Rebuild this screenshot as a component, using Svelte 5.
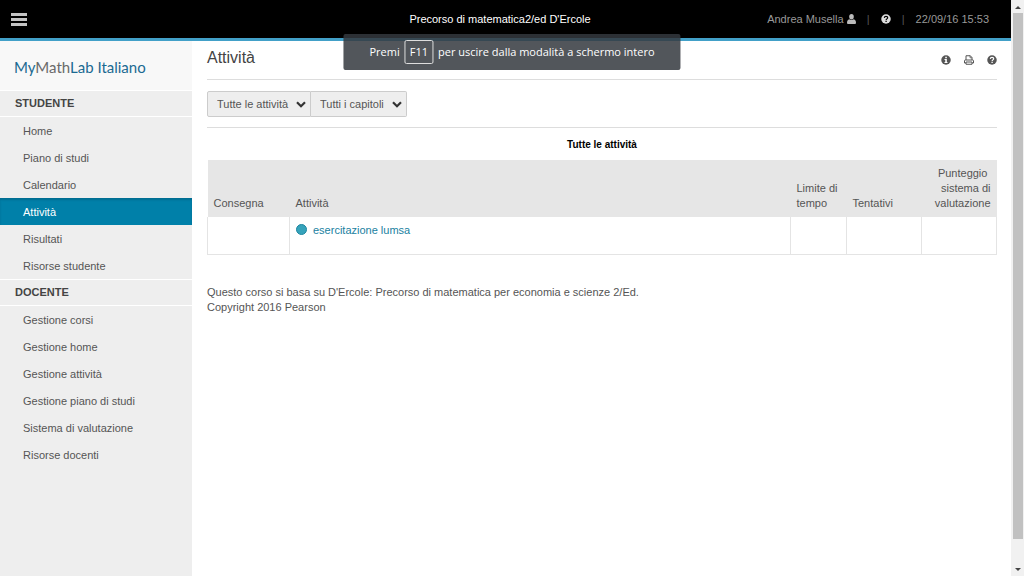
<script>
  const groups = [
    { title: 'STUDENTE', items: ['Home', 'Piano di studi', 'Calendario', 'Attività', 'Risultati', 'Risorse studente'] },
    { title: 'DOCENTE', items: ['Gestione corsi', 'Gestione home', 'Gestione attività', 'Gestione piano di studi', 'Sistema di valutazione', 'Risorse docenti'] }
  ];
  const current = 'Attività';
</script>

{#snippet help()}
  <svg width="10" height="10" viewBox="0 0 20 20" aria-hidden="true">
    <circle cx="10" cy="10" r="9.5" fill="currentColor" />
    <path d="M6.6 7.8C6.8 5.6 8.2 4.8 10 4.8c2 0 3.4 1 3.4 2.7 0 2.2-3.2 2.3-3.2 4.6" fill="none" stroke="var(--hole)" stroke-width="2.4" />
    <rect x="8.9" y="13.4" width="2.6" height="2.6" fill="var(--hole)" />
  </svg>
{/snippet}

{#snippet chevron()}
  <svg class="chevron" width="10" height="7" viewBox="0 0 10 7" aria-hidden="true">
    <path d="M1 1.2 5 5.2 9 1.2" fill="none" stroke="#333" stroke-width="2.2" />
  </svg>
{/snippet}

<div class="window">
  <div class="page">
    <header>
      <button class="menu" aria-label="Menu"><span></span><span></span><span></span></button>
      <div class="course">Precorso di matematica2/ed D'Ercole</div>
      <div class="account">
        <a class="user" href="#account">Andrea Musella
          <svg width="9" height="10" viewBox="0 0 18 20" aria-hidden="true">
            <ellipse cx="9" cy="5.6" rx="4.6" ry="5.4" fill="currentColor" />
            <path d="M4.5 10.5C1.5 11 0 14 0 17.5 0 19 1 20 2.500 20h13c1.500 0 2.500-1 2.500-2.500 0-3.500-1.500-6.500-4.500-7-1.200 1-2.800 1.700-4.500 1.700s-3.300-.7-4.500-1.700z" fill="currentColor" />
          </svg>
        </a>
        <span class="bar">|</span>
        <button class="icon light" aria-label="Aiuto">{@render help()}</button>
        <span class="bar">|</span>
        <time>22/09/16 15:53</time>
      </div>
    </header>

    <div class="body">
      <aside>
        <div class="logo">My<span>Math</span>Lab Italiano</div>
        <nav>
          {#each groups as group}
            <h2>{group.title}</h2>
            <ul>
              {#each group.items as item}
                <li><a href="#voce" class:active={item === current}>{item}</a></li>
              {/each}
            </ul>
          {/each}
        </nav>
      </aside>

      <main>
        <div class="title">
          <h1>Attività</h1>
          <div class="tools">
            <button class="icon" aria-label="Informazioni">
              <svg width="10" height="10" viewBox="0 0 20 20" aria-hidden="true">
                <circle cx="10" cy="10" r="9.5" fill="currentColor" />
                <path d="M8.500 3.500h3.200v2.800H8.500zM7 8h4.700v6H13v2H7v-2h1.500v-4H7z" fill="var(--hole)" />
              </svg>
            </button>
            <button class="icon" aria-label="Stampa">
              <svg width="10" height="10" viewBox="0 0 20 20" aria-hidden="true">
                <path d="M4 10V1.500h8.500L16 5v5" fill="none" stroke="currentColor" stroke-width="2" />
                <path d="M12 1v4.500h4" fill="none" stroke="currentColor" stroke-width="1.500" />
                <path d="M4 16H1v-4.500Q1 10 2.500 10h15q1.500 0 1.500 1.500V16h-3" fill="none" stroke="currentColor" stroke-width="2" />
                <path d="M4 14h12v4.500H4z" fill="none" stroke="currentColor" stroke-width="2" />
              </svg>
            </button>
            <button class="icon" aria-label="Guida">{@render help()}</button>
          </div>
        </div>

        <div class="filters">
          <div class="pick">
            <select aria-label="Attività"><option>Tutte le attività</option></select>
            {@render chevron()}
          </div>
          <div class="pick second">
            <select aria-label="Capitoli"><option>Tutti i capitoli</option></select>
            {@render chevron()}
          </div>
        </div>

        <table>
          <caption>Tutte le attività</caption>
          <colgroup><col class="due" /><col /><col class="limit" /><col class="tries" /><col class="score" /></colgroup>
          <thead>
            <tr><th>Consegna</th><th>Attività</th><th>Limite di tempo</th><th>Tentativi</th><th class="right">Punteggio&nbsp; sistema di valutazione</th></tr>
          </thead>
          <tbody>
            <tr><td></td><td><span class="dot"></span><a href="#esercitazione">esercitazione lumsa</a></td><td></td><td></td><td></td></tr>
          </tbody>
        </table>

        <footer>
          <p>Questo corso si basa su D'Ercole: Precorso di matematica per economia e scienze 2/Ed.</p>
          <p>Copyright 2016 Pearson</p>
        </footer>
      </main>
    </div>
  </div>

  <div class="scroll" aria-hidden="true">
    <i class="up"></i>
    <div class="thumb"></div>
    <i class="down"></i>
  </div>

  <div class="toast" role="status">Premi <kbd>F11</kbd> per uscire dalla modalità a schermo intero</div>
</div>

<style>
  :global(body) { background: #fff; }
  .window {
    position: relative;
    display: flex;
    min-height: 100vh;
    font: 11px/15px "Liberation Sans", Arial, sans-serif;
    color: #555;
  }
  .window * { box-sizing: border-box; }
  .page { flex: 1; min-width: 0; display: flex; flex-direction: column; }
  a { color: inherit; text-decoration: none; }
  button { font: inherit; color: inherit; background: none; border: 0; padding: 0; }
  svg { display: block; }
  header {
    display: grid;
    grid-template-columns: 1fr auto 1fr;
    align-items: center;
    height: 41px;
    padding: 0 22px 0 11px;
    background: #000;
    border-bottom: 3px solid #42a0c8;
  }
  .menu { display: grid; gap: 2px; width: 16px; }
  .menu span { height: 3px; background: #c4c4c4; }
  .course { color: #fff; }
  .account { display: flex; align-items: center; justify-content: flex-end; color: #999; }
  .user { display: flex; align-items: center; gap: 3px; }
  .user svg { color: #bbb; }
  .bar { width: 25px; text-align: center; color: #555; }
  .icon { display: flex; --hole: #fff; color: #555; }
  .light { --hole: #000; color: #ddd; }
  .body { flex: 1; display: flex; }
  aside { width: 192px; flex: none; background: #eee; }
  .logo {
    height: 49px;
    padding: 16px 14px 0;
    background: #f8f8f8;
    font: 15px/20px Lato, sans-serif;
    color: #1b6a92;
    white-space: nowrap;
  }
  .logo span { color: #6a6a6a; }
  h2 {
    margin: 0;
    height: 27px;
    padding: 0 15px;
    border: solid #fff;
    border-width: 1px 0;
    font-size: 11px;
    line-height: 25px;
    color: #444;
  }
  ul { list-style: none; margin: 0; padding: 0; }
  li a { display: block; height: 27px; padding: 1px 23px 0; line-height: 27px; }
  .active { background: #0080a9; color: #fff; box-shadow: inset 0 2px 2px #006d92; }
  main { flex: 1; min-width: 0; padding: 0 14px 0 15px; }
  .title {
    display: flex;
    justify-content: space-between;
    height: 39px;
    border-bottom: 1px solid #ddd;
  }
  h1 { margin: 7px 0 0; font-size: 16px; line-height: 20px; font-weight: 400; color: #444; }
  .tools { display: flex; align-items: center; gap: 13px; }
  .filters { display: flex; padding: 11px 0 10px; border-bottom: 1px solid #ddd; }
  .pick { position: relative; width: 104px; }
  .second { width: 96px; }
  select {
    appearance: none;
    display: block;
    width: 100%;
    height: 26px;
    padding: 0 9px;
    border: 1px solid #ccc;
    border-radius: 2px 0 0 2px;
    background: #eee;
    font: inherit;
    color: #555;
  }
  .second select { border-left: 0; border-radius: 0 2px 2px 0; }
  .chevron { position: absolute; right: 5px; top: 10px; pointer-events: none; }
  table { width: 100%; table-layout: fixed; border-collapse: collapse; }
  caption { height: 32px; padding-top: 9px; font-size: 10px; font-weight: 700; color: #000; }
  .due { width: 82px; }
  .limit { width: 56px; }
  .tries { width: 75px; }
  .score { width: 75px; }
  th {
    height: 57px;
    padding: 6px;
    background: #e6e6e6;
    font-weight: 400;
    text-align: left;
    vertical-align: bottom;
  }
  .right { text-align: right; }
  td { height: 37px; padding: 6px 5px; border: 1px solid #e4e4e4; border-top: 0; vertical-align: top; }
  td a { color: #20819f; }
  .dot {
    display: inline-block;
    width: 11px;
    height: 11px;
    margin: 0 6px 0 1px;
    border: 1px solid #1c86a0;
    border-radius: 50%;
    background: #36a3bb;
    vertical-align: -1px;
  }
  footer { padding-top: 30px; }
  p { margin: 0; }
  .scroll {
    width: 13px;
    flex: none;
    display: flex;
    flex-direction: column;
    align-items: center;
    background: #f1f1f1;
  }
  .scroll i { width: 0; height: 0; border: 3px solid transparent; }
  .scroll .up { margin: 3px 0 4px; border-bottom-color: #444; }
  .scroll .down { margin: auto 0 2px; border-top-color: #444; }
  .thumb { width: 10px; height: 91.3%; background: #c1c1c1; }
  .toast {
    position: absolute;
    top: 34px;
    left: 50%;
    transform: translateX(-50%);
    display: flex;
    align-items: center;
    gap: 5px;
    height: 36px;
    padding: 0 26px;
    border-radius: 2px;
    background: rgba(52, 56, 62, 0.85);
    color: #fff;
    font: 11px/16px "Open Sans", sans-serif;
    white-space: nowrap;
  }
  kbd { padding: 3px 4px; border: 1px solid #ddd; border-radius: 2px; font: inherit; }
</style>
